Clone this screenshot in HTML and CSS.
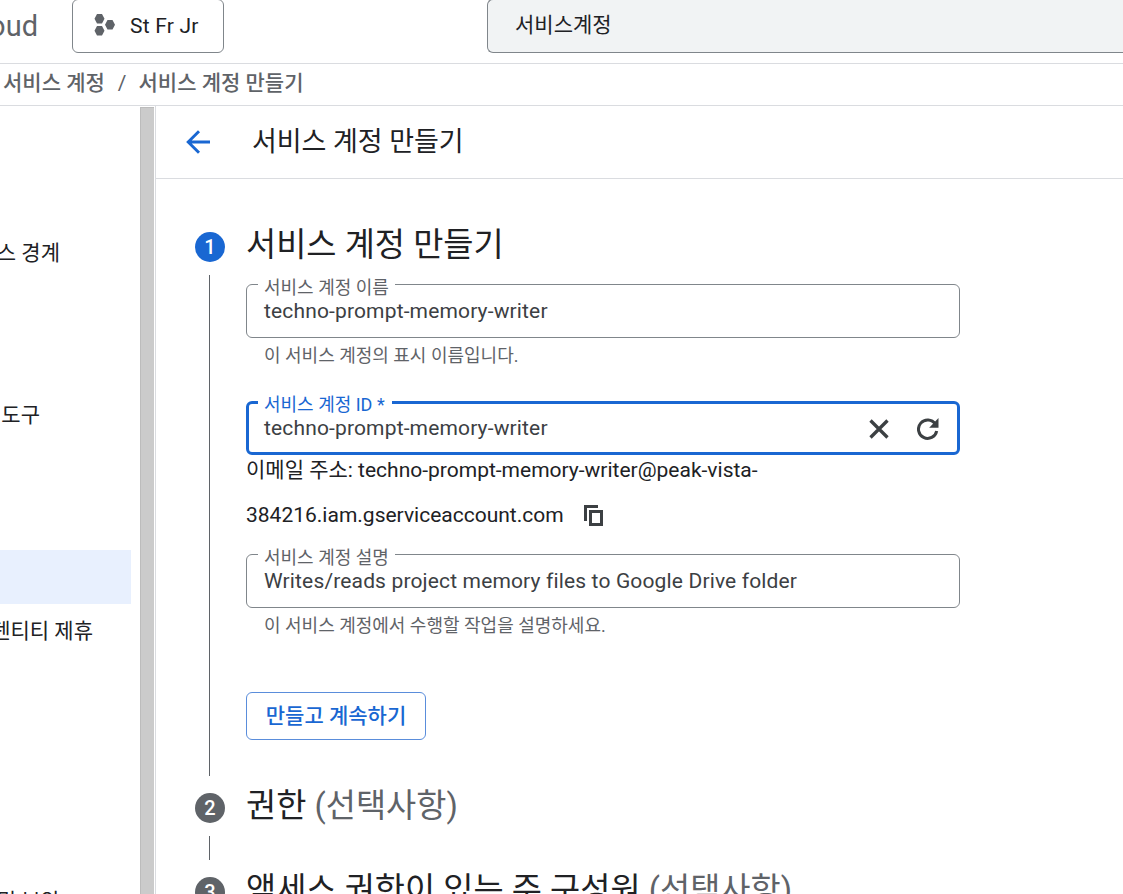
FILE: index.html
```html
<!DOCTYPE html>
<html lang="ko">
<head>
<meta charset="utf-8">
<title>서비스 계정 만들기</title>
<link rel="stylesheet" href="styles.css">
</head>
<body>
<header class="topbar">
  <div class="logo"><span>oud</span></div>
  <button class="project">
    <svg width="22" height="22" viewBox="0 0 22 22" fill="#5f6368"><path d="M3 0h5l2.500 4.800L8 9.500H3L.5 4.800zM3 12h5l2.500 4.800L8 21.500H3L.5 16.800zM13.500 6h5l2.500 4.800-2.500 4.700h-5L11 10.800z"/></svg>
    <span>St Fr Jr</span>
  </button>
  <div class="search">서비스계정</div>
</header>
<nav class="crumbs"><span>서비스 계정</span><span class="slash">/</span><span>서비스 계정 만들기</span></nav>
<div class="body">
  <nav class="side">
    <div class="item end60"><span>스 경계</span></div>
    <div class="item end40 after-gap"><span>도구</span></div>
    <div class="item selected after-gap"></div>
    <div class="item end93"><span>덴티티 제휴</span></div>
    <div class="item end60 last"><span>및 보안</span></div>
  </nav>
  <div class="scrollbar"></div>
  <main class="main">
    <div class="titlebar">
      <svg class="back" width="24" height="24" viewBox="0 0 24 24" fill="none" stroke="#1967d2" stroke-width="2.900"><path d="M24 12H2.500M13 1.200 2.200 12 13 22.800"/></svg>
      <h1>서비스 계정 만들기</h1>
    </div>
    <div class="steps">
      <section class="step first">
        <div class="rail"><span class="num active">1</span><i></i></div>
        <div class="content">
          <h2>서비스 계정 만들기</h2>
          <div class="field"><label>서비스 계정 이름</label><span class="value">techno-prompt-memory-writer</span></div>
          <p class="hint">이 서비스 계정의 표시 이름입니다.</p>
          <div class="field focus"><label>서비스 계정 ID *</label><span class="value">techno-prompt-memory-writer</span>
            <svg class="clear" width="20" height="20" viewBox="0 0 20 20" stroke="#3c4043" stroke-width="3.300"><path d="m1.500 1.500 17 17m0-17-17 17"/></svg>
            <svg class="reload" width="22" height="22" viewBox="0 0 22 22"><path d="M18.300 6A9.200 9.200 0 1 0 19.700 13" fill="none" stroke="#3c4043" stroke-width="3"/><path d="M21.500 0v9.800H12.200z" fill="#3c4043"/></svg>
          </div>
          <div class="email">이메일 주소: techno-prompt-memory-writer@peak-vista-<br>384216.iam.gserviceaccount.com<svg class="copy" width="20" height="22" viewBox="0 0 20 22" fill="none" stroke="#3c4043" stroke-width="3"><path d="M1.500 16V1.500H14M6.500 6.500h11v13h-11z"/></svg></div>
          <div class="field"><label>서비스 계정 설명</label><span class="value">Writes/reads project memory files to Google Drive folder</span></div>
          <p class="hint">이 서비스 계정에서 수행할 작업을 설명하세요.</p>
          <button class="continue">만들고 계속하기</button>
        </div>
      </section>
      <section class="step second">
        <div class="rail"><span class="num">2</span><i></i></div>
        <div class="content"><h2>권한 <em>(선택사항)</em></h2></div>
      </section>
      <section class="step">
        <div class="rail"><span class="num">3</span></div>
        <div class="content"><h2>액세스 권한이 있는 주 구성원 <em>(선택사항)</em></h2></div>
      </section>
    </div>
  </main>
</div>
</body>
</html>
```
FILE: styles.css
```css
* { box-sizing: border-box; }
body { margin: 0; height: 894px; overflow: hidden; display: flex; flex-direction: column; background: #fff; color: #202124; font: 21px/30px Roboto, "Noto Sans CJK KR", sans-serif; white-space: nowrap; }
button { font: inherit; background: #fff; padding: 0; }
h1, h2, p { margin: 0; font-weight: 400; }
svg { display: block; flex: none; }

.topbar { height: 64px; flex: none; display: flex; align-items: flex-start; border-bottom: 1px solid #dadce0; }
.logo { width: 72px; flex: none; height: 52px; display: flex; justify-content: flex-end; align-items: center; padding-right: 34px; color: #5f6368; font-size: 29px; }
.project { width: 152px; flex: none; height: 54px; margin-top: -1px; border: 1px solid #80868b; border-radius: 6px; display: flex; align-items: center; gap: 14px; padding: 0 0 1px 21px; color: #202124; letter-spacing: .2px; }
.project svg { margin-top: -2px; }
.search { margin-left: 263px; flex: 1; height: 54px; margin-top: -1px; border: 1px solid #80868b; border-right: 0; border-radius: 6px 0 0 6px; background: #f1f3f4; padding: 10px 27px; }

.crumbs { height: 42px; flex: none; display: flex; align-items: center; padding: 0 0 3px 3px; border-bottom: 1px solid #dadce0; color: #5f6368; font-weight: 500; }
.slash { margin: 0 12px 0 13px; font-weight: 400; }

.body { flex: 1; min-height: 0; display: flex; }
.side { width: 140px; flex: none; padding-top: 120px; overflow: hidden; }
.item { width: 131px; height: 54px; display: flex; justify-content: flex-end; align-items: center; padding-bottom: 1px; }
.item span { flex: none; }
.end60 { padding-right: 71px; }
.end40 { padding-right: 91px; }
.end93 { padding-right: 38px; }
.after-gap { margin-top: 108px; }
.selected { background: #e8f0fe; }
.last { margin-top: 216px; }
.scrollbar { width: 14px; flex: none; margin-top: 1px; background: #cbcbcb; border-left: 1px solid #bcbcbc; border-top: 1px solid #bcbcbc; }

.main { flex: 1; min-width: 0; margin-left: 1px; border-left: 1px solid #dadce0; }
.titlebar { height: 73px; display: flex; align-items: center; gap: 42px; padding-left: 30px; border-bottom: 1px solid #dadce0; }
.titlebar h1 { font-size: 27px; line-height: 40px; padding-bottom: 1px; letter-spacing: -.05px; }

.steps { padding: 53px 0 0 39px; }
.step { display: flex; }
.first { height: 561px; }
.second { height: 84px; }
.rail { width: 51px; flex: none; display: flex; flex-direction: column; padding-bottom: 17px; }
.rail i { width: 1px; flex: 1; margin: 13px 0 0 14px; background: #5f6368; }
.num { width: 30px; height: 30px; flex: none; border-radius: 50%; background: #5f6368; color: #fff; text-align: center; font-size: 20px; font-weight: 500; }
.active { background: #1967d2; }
.content { width: 714px; }
.content h2 { font-size: 32.800px; line-height: 48px; height: 51px; margin-top: -11px; }
.content em { font-style: normal; color: #5f6368; }

.field { position: relative; height: 54px; margin-top: 12px; border: 1px solid #80868b; border-radius: 6px; display: flex; align-items: center; padding-left: 17px; color: #3c4043; }
.field label { position: absolute; left: 11px; top: -10px; padding: 0 6px; line-height: 26px; font-size: 18px; color: #5f6368; background: linear-gradient(#fff, #fff) 0 7px / 100% 6px no-repeat; }
.value { flex: 1; letter-spacing: .15px; }
.focus { margin-top: 31px; border: 3px solid #1967d2; padding: 0 18px 0 15px; }
.focus label { left: 9px; top: -12px; padding-right: 7px; color: #1967d2; }
.clear, .reload { margin-top: 2px; }
.clear { margin-right: 28px; }
.hint { height: 32px; padding: 3px 0 0 18px; font-size: 18px; color: #5f6368; }
.email { margin-top: -7px; line-height: 45px; height: 94px; }
.copy { display: inline-block; margin-left: 20px; vertical-align: -5px; }
.continue { margin-top: 52px; width: 180px; height: 48px; border: 1px solid #5a8ddb; border-radius: 6px; color: #1967d2; font-weight: 500; display: flex; align-items: center; justify-content: center; padding-bottom: 1px; }
```
